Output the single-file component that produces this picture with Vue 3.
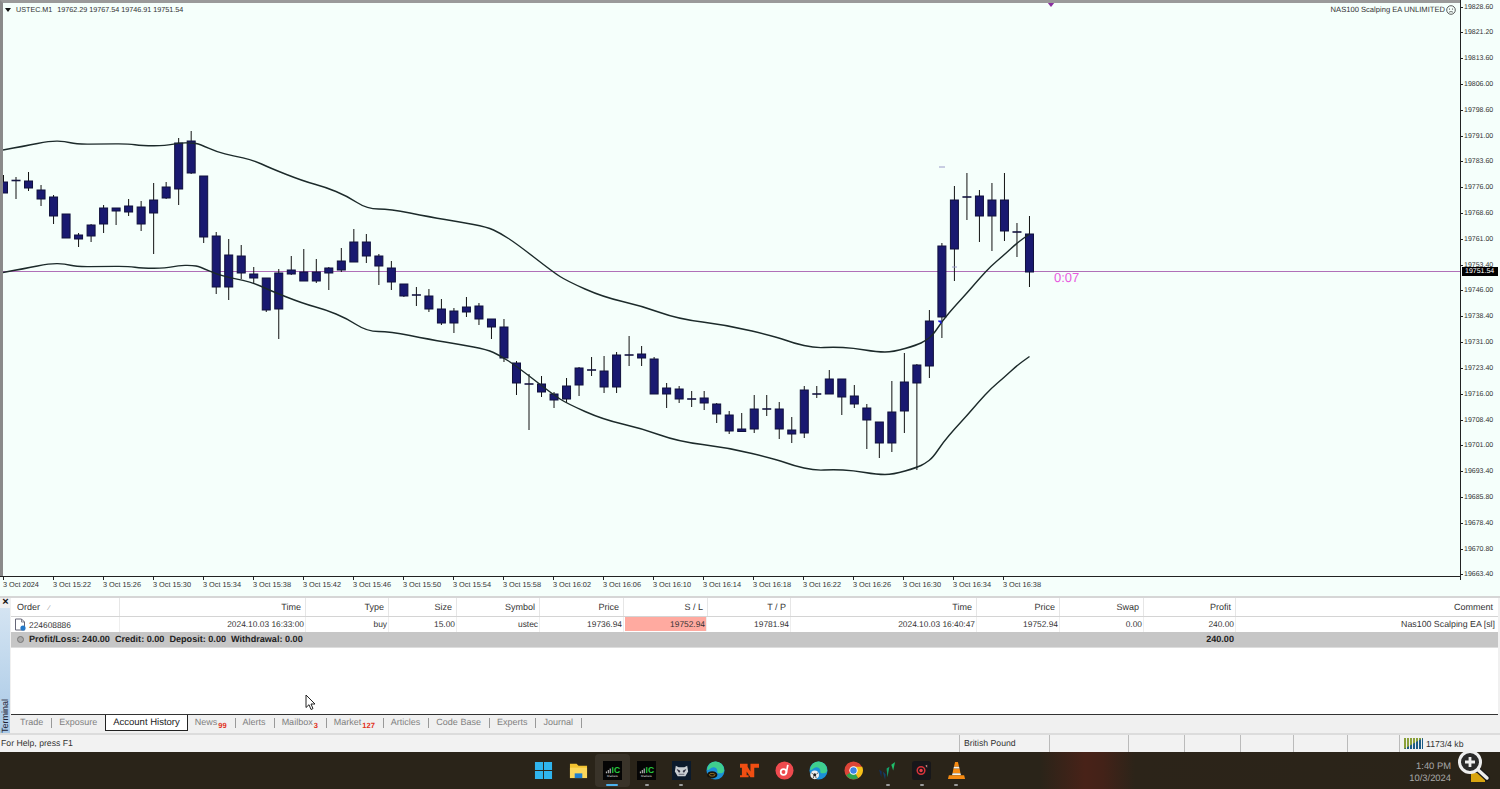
<script setup>
import { computed } from 'vue'

// high, body top, body bottom, low (page y). Candles are about 12.5px apart
const bars = [
  [175, 182, 193, 193], [177, 180.5, 180.5, 199], [172, 181, 188, 191], [185, 190, 199, 206], [195, 197, 216, 224],
  [214, 214, 238, 238], [233, 235, 239, 247], [224, 225, 236, 242], [205, 208, 224, 233], [208, 208, 211, 225],
  [199, 206, 212, 216], [201, 207, 224, 231], [183, 200, 213, 254], [182, 187, 198, 199], [138, 143, 189, 205],
  [131, 141, 173, 174], [176, 176, 237, 243], [232, 236, 287, 294], [239, 255, 287, 300], [245, 256, 273, 279],
  [267, 274, 278, 283], [278, 278, 310, 312], [269, 273, 309, 339], [256, 270, 274, 275], [249, 272, 281, 281],
  [259, 272, 281, 283], [267, 268, 273, 290], [248, 261, 270, 272], [229, 242, 262, 262], [234, 242, 256, 263],
  [254, 256, 266, 285], [261, 268, 282, 290], [284, 284, 296, 297], [287, 295, 295, 306], [289, 296, 309, 312],
  [299, 309, 323, 325], [308, 311, 323, 333], [297, 307, 312, 317], [303, 306, 319, 325], [319, 319, 327, 339],
  [319, 327, 358, 362], [361, 363, 383, 395], [374, 384, 384, 430], [376, 384, 392, 397], [392, 394, 400, 408],
  [378, 386, 399, 403], [367, 368, 385, 396], [357, 370, 370, 376], [356, 371, 387, 393], [352, 355, 387, 393],
  [336, 355, 355, 366], [346, 354, 358, 366], [357, 359, 394, 394], [383, 388, 394, 408], [386, 389, 399, 403],
  [391, 399, 399, 407], [391, 398, 403, 410], [403, 404, 414, 423], [411, 415, 431, 434], [413, 429, 431.5, 432],
  [395, 409, 429, 433], [395, 409, 409, 416], [402, 409, 429, 439], [417, 430, 434, 443], [386, 390, 433, 438],
  [386, 394, 394, 398], [370, 379, 394, 394], [379, 379, 397, 415], [385, 396, 404, 408], [404, 408, 420, 449],
  [422, 422, 443, 458], [381, 412, 443, 452], [353, 382, 411, 433], [364, 365, 383, 470], [310, 321, 366, 378],
  [243, 246, 317, 338], [186, 200, 249, 281], [173, 197, 197, 220], [190, 196, 216, 242], [183, 200, 216, 251],
  [173, 200, 231, 241], [223, 232, 232, 257], [216, 234, 272, 287]
]

const candles = computed(() => bars.map((b, i) => ({
  x: 3.5 + 12.512 * i,
  high: b[0],
  top: b[1],
  bottom: b[2],
  low: b[3],
  doji: b[1] === b[2]
})))

// upper band, the lower one has the same shape 122.5px further down
const band = [
  [3, 150], [25, 146], [50, 141], [65, 141.3], [76, 144.3], [103, 144], [128, 143.7], [142, 145.7], [166, 145.7], [178, 143],
  [192, 142.7], [200, 144.3], [217, 152], [233, 155.7], [253, 160], [270, 168], [303, 181], [325, 187], [347, 196], [367, 209],
  [390, 209], [430, 217], [460, 222], [487, 227], [500, 233], [517, 244], [553, 272], [567, 281], [603, 297], [642, 306],
  [678, 319], [727, 325], [777, 337], [793, 343], [815, 348], [833, 347], [853, 348], [877, 352], [893, 352], [917, 345],
  [925, 341], [933, 335], [943, 320], [955, 306], [967, 293], [979, 279], [991, 266], [1004, 255], [1017, 243], [1029.5, 234]
]

// quadratic through the midpoints so the band has no kinks
function smoothPath(points, shift) {
  const pts = points.map((p) => [p[0], p[1] + shift])
  let d = `M${pts[0][0]} ${pts[0][1]}`
  for (let i = 1; i < pts.length - 1; i++) {
    const mx = (pts[i][0] + pts[i + 1][0]) / 2
    const my = (pts[i][1] + pts[i + 1][1]) / 2
    d += `Q${pts[i][0]} ${pts[i][1]} ${mx} ${my}`
  }
  const last = pts[pts.length - 1]
  return `${d}L${last[0]} ${last[1]}`
}
const upperBand = smoothPath(band, 0)
const lowerBand = smoothPath(band, 122.5)

const prices = [
  '19828.60', '19821.20', '19813.60', '19806.00', '19798.60', '19791.00', '19783.60', '19776.00',
  '19768.60', '19761.00', '19753.40', '19746.00', '19738.40', '19731.00', '19723.40', '19716.00',
  '19708.40', '19701.00', '19693.40', '19685.80', '19678.40', '19670.80', '19663.40'
]
const times = [
  '3 Oct 2024', '3 Oct 15:22', '3 Oct 15:26', '3 Oct 15:30', '3 Oct 15:34', '3 Oct 15:38', '3 Oct 15:42',
  '3 Oct 15:46', '3 Oct 15:50', '3 Oct 15:54', '3 Oct 15:58', '3 Oct 16:02', '3 Oct 16:06', '3 Oct 16:10',
  '3 Oct 16:14', '3 Oct 16:18', '3 Oct 16:22', '3 Oct 16:26', '3 Oct 16:30', '3 Oct 16:34', '3 Oct 16:38'
]

const headers = ['Time', 'Type', 'Size', 'Symbol', 'Price', 'S / L', 'T / P', 'Time', 'Price', 'Swap', 'Profit', 'Comment']
const row = ['2024.10.03 16:33:00', 'buy', '15.00', 'ustec', '19736.94', '19752.94', '19781.94', '2024.10.03 16:40:47', '19752.94', '0.00', '240.00', 'Nas100 Scalping EA [sl]']

const tabs = [
  { name: 'Trade' }, { name: 'Exposure' }, { name: 'Account History', active: true }, { name: 'News', badge: '99' },
  { name: 'Alerts' }, { name: 'Mailbox', badge: '3' }, { name: 'Market', badge: '127' }, { name: 'Articles' },
  { name: 'Code Base' }, { name: 'Experts' }, { name: 'Journal' }
]

const statusCells = [
  { width: 90, text: 'British Pound' }, { width: 79 }, { width: 56 }, { width: 56 }, { width: 53 }, { width: 54 }, { width: 52 }
]
</script>

<template>
  <div class="screen">
    <section class="chart-window">
      <div class="chart-row">
        <div class="plot">
          <svg class="plot-svg" width="1460" height="576" viewBox="0 0 1460 576">
            <line x1="0" y1="271.5" x2="1460" y2="271.5" stroke="#b070b8" stroke-width="1" />
            <g v-for="c in candles" :key="c.x">
              <line :x1="c.x" :x2="c.x" :y1="c.high" :y2="c.low" stroke="#111" stroke-width="1" />
              <line v-if="c.doji" :x1="c.x - 4.5" :x2="c.x + 4.5" :y1="c.top" :y2="c.top" stroke="#14143f" stroke-width="1.6" />
              <rect v-else :x="c.x - 4" :y="c.top" width="8" :height="c.bottom - c.top" fill="#191970" stroke="#10103c" stroke-width="1" />
            </g>
            <path :d="upperBand" fill="none" stroke="#1c2a2a" stroke-width="1.4" stroke-linejoin="round" />
            <path :d="lowerBand" fill="none" stroke="#1c2a2a" stroke-width="1.4" stroke-linejoin="round" />
            <line x1="939" y1="167" x2="945" y2="167" stroke="#9a9ac8" stroke-width="1" />
            <line x1="952" y1="267" x2="957" y2="267" stroke="#9a9ac8" stroke-width="1" />
            <path d="M938 320.500h4l-1 1 1 1.500-1 1-1-1.500-1.500-.500z" fill="#1a1ae0" />
            <path d="M1047 2h8l-4 5z" fill="#8a2fa0" />
          </svg>
          <div class="legend">
            <span class="legend-arrow"></span>
            <span>USTEC.M1</span>
            <span class="legend-ohlc">19762.29 19767.54 19746.91 19751.54</span>
          </div>
          <div class="ea-name">
            <span>NAS100 Scalping EA UNLIMITED</span>
            <svg width="10" height="10" viewBox="0 0 10 10">
              <circle cx="5" cy="5" r="4.300" fill="none" stroke="#333" stroke-width=".8" />
              <circle cx="3.500" cy="4" r=".6" fill="#333" />
              <circle cx="6.500" cy="4" r=".6" fill="#333" />
              <path d="M3 7.200q2-1.400 4 0" fill="none" stroke="#333" stroke-width=".7" />
            </svg>
          </div>
          <span class="countdown">0:07</span>
        </div>
        <div class="price-axis">
          <span v-for="p in prices" :key="p" class="price-label">{{ p }}</span>
          <span class="price-tag">19751.54</span>
        </div>
      </div>
      <div class="time-axis">
        <span v-for="t in times" :key="t" class="time-label">{{ t }}</span>
      </div>
    </section>

    <section class="terminal">
      <aside class="terminal-side">
        <span class="side-close">×</span>
        <div class="side-strip"><span class="side-title">Terminal</span></div>
      </aside>
      <div class="terminal-main">
        <div class="table-area">
          <div class="grid head">
            <div class="cell cell-order">Order <span class="sort-mark">⁄</span></div>
            <div v-for="(h, i) in headers" :key="i" class="cell">{{ h }}</div>
          </div>
          <div class="grid data">
            <div class="cell cell-order">
              <svg width="12" height="13" viewBox="0 0 12 13">
                <path d="M1.500 1h6l3 3v8h-9z" fill="#fff" stroke="#667" stroke-width="1" />
                <path d="M7.500 1v3h3" fill="none" stroke="#667" stroke-width=".8" />
                <circle cx="9" cy="10" r="2.600" fill="#2478c8" />
              </svg>
              <span>224608886</span>
            </div>
            <div v-for="(v, i) in row" :key="i" class="cell" :class="{ 'cell-sl': i === 5 }">{{ v }}</div>
          </div>
          <div class="grid total">
            <div class="total-text">
              <span class="total-dot"></span>
              <span>Profit/Loss: 240.00</span>
              <span>Credit: 0.00</span>
              <span>Deposit: 0.00</span>
              <span>Withdrawal: 0.00</span>
            </div>
            <div class="total-profit">240.00</div>
          </div>
          <svg class="cursor" width="12" height="17" viewBox="0 0 12 17">
            <path d="M1 1v12.500l3-2.800 2 4.800 2-.9-2-4.600h4z" fill="#fff" stroke="#222" stroke-width="1" />
          </svg>
        </div>
        <nav class="tabs">
          <span v-for="t in tabs" :key="t.name" class="tab" :class="{ active: t.active }">
            {{ t.name }}<sub v-if="t.badge" class="tab-badge">{{ t.badge }}</sub>
          </span>
        </nav>
      </div>
    </section>

    <footer class="status-bar">
      <span class="status-help">For Help, press F1</span>
      <span v-for="(s, i) in statusCells" :key="i" class="status-cell" :style="{ width: s.width + 'px' }">{{ s.text }}</span>
      <span class="status-net">
        <svg width="19" height="11" viewBox="0 0 19 11">
          <path d="M0 0h19v11H0z" fill="#8aa03a" />
          <path d="M0 11L19 0v11z" fill="#1d5d86" />
          <path d="M2.500 0v11M5.500 0v11M8.500 0v11M11.500 0v11M14.500 0v11M17.500 0v11" stroke="#f0f0f0" stroke-width="1" />
        </svg>
        1173/4 kb
      </span>
    </footer>

    <div class="taskbar">
      <div class="task-icons">
        <div class="task-item">
          <svg viewBox="0 0 20 20"><path d="M1 1h8.500v8.500H1zM10.500 1H19v8.500h-8.500zM1 10.500h8.500V19H1zM10.500 10.500H19V19h-8.500z" fill="#2fb4ee" /></svg>
        </div>
        <div class="task-item">
          <svg viewBox="0 0 20 20">
            <path d="M1 3h7l2 2h9v13H1z" fill="#f2c230" />
            <path d="M1 7h18v11H1z" fill="#fbd75a" />
            <path d="M6 13h8v5H6z" fill="#1f7fd0" />
          </svg>
        </div>
        <div class="task-item active">
          <svg viewBox="0 0 20 20">
            <path d="M0 0h20v20H0z" fill="#050505" />
            <path d="M3 11h1.200v2H3zM5 9.500h1.200V13H5zM7 8h1.200v5H7z" fill="#bbb" />
            <text x="9" y="12.500" class="ic-text">IC</text>
            <text x="10" y="16.500" class="ic-sub">Markets</text>
          </svg>
        </div>
        <div class="task-item running">
          <svg viewBox="0 0 20 20">
            <path d="M0 0h20v20H0z" fill="#050505" />
            <path d="M3 11h1.200v2H3zM5 9.500h1.200V13H5zM7 8h1.200v5H7z" fill="#bbb" />
            <text x="9" y="12.500" class="ic-text">IC</text>
            <text x="10" y="16.500" class="ic-sub">Markets</text>
          </svg>
        </div>
        <div class="task-item running">
          <svg viewBox="0 0 20 20">
            <path d="M0 0h20v20H0z" fill="#0b1a2c" />
            <path d="M4 5l3 1.500h6L16 5l1 6-3 5H6l-3-5z" fill="#c9ced3" />
            <path d="M5.500 9l3 1.500-1 1.500zM14.500 9l-3 1.500 1 1.500zM7 14h6" fill="#223" stroke="#223" stroke-width=".6" />
          </svg>
        </div>
        <div class="task-item">
          <svg viewBox="0 0 20 20">
            <circle cx="10" cy="10" r="9.500" fill="#1b8fd8" />
            <path d="M1 9a9 9 0 0 1 18 1c0 2-2 3-4.500 3-2 0-3-1-2.500-2.500C12 7 8 5.500 5 7.500 3 9 2 10 1 9z" fill="#3fcf8e" />
            <ellipse cx="6.500" cy="14.500" rx="5.500" ry="3.800" fill="#17140c" />
            <ellipse cx="6.500" cy="14.500" rx="3" ry="1.400" fill="none" stroke="#b08a30" stroke-width=".8" />
          </svg>
        </div>
        <div class="task-item">
          <svg viewBox="0 0 20 20">
            <path d="M0 3h8v3l3 5V3h9v4h-5v10h-4l-4-6v4h2v2H0v-2h2V7H0z" fill="#f04e12" />
          </svg>
        </div>
        <div class="task-item">
          <svg viewBox="0 0 20 20">
            <circle cx="10" cy="10" r="9.500" fill="#ee4a4e" />
            <circle cx="9" cy="11.500" r="3" fill="none" stroke="#fff" stroke-width="1.800" />
            <path d="M13.500 4l-1.800 9.500" stroke="#fff" stroke-width="1.800" fill="none" />
          </svg>
        </div>
        <div class="task-item">
          <svg viewBox="0 0 20 20">
            <circle cx="10" cy="10" r="9.500" fill="#1b8fd8" />
            <path d="M1 9a9 9 0 0 1 18 1c0 2-2 3-4.500 3-2 0-3-1-2.500-2.500C12 7 8 5.500 5 7.500 3 9 2 10 1 9z" fill="#3fcf8e" />
            <circle cx="6" cy="14.500" r="4.600" fill="#eee" />
            <circle cx="6" cy="14.500" r="1.600" fill="#222" />
            <path d="M2.500 12.500l1.500 1M9.500 12.500L8 13.500M4.500 18l.5-2M7.500 18L7 16" stroke="#222" stroke-width=".8" />
          </svg>
        </div>
        <div class="task-item">
          <svg viewBox="0 0 20 20">
            <circle cx="10" cy="10" r="9.500" fill="#dc4437" />
            <path d="M10 10L2.300 15A9.500 9.500 0 0 0 15 18l-5-8z" fill="#2fa44f" />
            <path d="M10 10l5 8A9.500 9.500 0 0 0 19.200 6H10z" fill="#f6c119" />
            <circle cx="10" cy="10" r="4.400" fill="#fff" />
            <circle cx="10" cy="10" r="3.400" fill="#3c82e6" />
          </svg>
        </div>
        <div class="task-item running">
          <svg viewBox="0 0 20 20">
            <path d="M1 9l3 2-.5 6z" fill="#12305c" />
            <path d="M5 11l3 3-.500 6z" fill="#123f6c" />
            <path d="M9 8l3-2-2 11z" fill="#16a06a" />
            <path d="M14 4l4-3-2 9z" fill="#1fbf6a" />
          </svg>
        </div>
        <div class="task-item running">
          <svg viewBox="0 0 20 20">
            <rect x="0" y="0" width="20" height="20" rx="3" fill="#17171a" />
            <circle cx="9.500" cy="10" r="4" fill="none" stroke="#d8333a" stroke-width="1.600" />
            <circle cx="9.500" cy="10" r="1.800" fill="#e8404a" />
            <path d="M14 5l2-1v3z" fill="#c88" />
          </svg>
        </div>
        <div class="task-item running">
          <svg viewBox="0 0 20 20">
            <path d="M8.500 1h3l1.200 5h-5.400zM6.800 8h6.400l1 5H5.800z" fill="#f58a12" />
            <path d="M7.300 6h5.400l.5 2H6.800zM5.800 13h8.400l.5 2H5.300z" fill="#f4f1ea" />
            <path d="M2 15h16l1 4H1z" fill="#f58a12" />
          </svg>
        </div>
      </div>
      <div class="clock">
        <span>1:40 PM</span>
        <span>10/3/2024</span>
      </div>
      <svg class="tray-file" width="14" height="10" viewBox="0 0 14 10">
        <path d="M0 1h14v9H0z" fill="#d8a410" />
      </svg>
      <svg class="magnifier" width="34" height="34" viewBox="0 0 34 34">
        <path d="M19 19l11 10" stroke="#1a1a1a" stroke-width="6" stroke-linecap="round" />
        <path d="M19 19l11 10" stroke="#eee" stroke-width="3.400" stroke-linecap="round" />
        <circle cx="13" cy="13" r="10.500" fill="#2a2a2a" stroke="#eee" stroke-width="3" />
        <path d="M13 8v10M8 13h10" stroke="#eee" stroke-width="2.800" />
      </svg>
    </div>
  </div>
</template>

<style scoped>
.screen {
  position: relative;
  display: flex;
  flex-direction: column;
  width: 1500px;
  height: 789px;
  overflow: hidden;
  font-family: "Liberation Sans", Arial, sans-serif;
  text-rendering: geometricPrecision;
  color: #333;
  background: #f0f0f0;
}

/* chart */
.chart-window {
  height: 596px;
  background: #f5fffb;
}
.chart-row {
  display: flex;
  height: 577px;
}
.plot {
  position: relative;
  width: 1460px;
  height: 577px;
  overflow: hidden;
  border-bottom: 1px solid #222;
  box-sizing: border-box;
}
.plot::after {
  content: '';
  position: absolute;
  inset: 0;
  border-top: 3px solid #9a9a9a;
  border-left: 3px solid #8a8a8a;
  pointer-events: none;
}
.plot-svg {
  display: block;
}
.legend {
  position: absolute;
  top: 5px;
  left: 5px;
  z-index: 1;
  display: flex;
  align-items: center;
  gap: 3px;
  font-size: 7.2px;
  line-height: 9px;
}
.legend-arrow {
  width: 0;
  height: 0;
  margin-right: 2px;
  border-left: 3px solid transparent;
  border-right: 3px solid transparent;
  border-top: 4px solid #111;
}
.legend-ohlc {
  margin-left: 2px;
}
.ea-name {
  position: absolute;
  top: 5px;
  right: 4px;
  z-index: 1;
  display: flex;
  align-items: center;
  gap: 1px;
  font-size: 7.6px;
  line-height: 10px;
}
.countdown {
  position: absolute;
  left: 1054px;
  top: 270px;
  font-size: 13px;
  line-height: 16px;
  color: #e85adf;
}
.price-axis {
  position: relative;
  flex: 1;
  display: flex;
  flex-direction: column;
  justify-content: space-between;
  padding: 3.5px 0 0;
  height: 576px;
  border-left: 1px solid #222;
}
.price-label {
  position: relative;
  padding-left: 3px;
  font-size: 7px;
  line-height: 8px;
}
.price-label::before {
  content: '';
  position: absolute;
  left: 0;
  top: 3px;
  width: 2px;
  height: 1px;
  background: #222;
}
.price-tag {
  position: absolute;
  top: 267px;
  left: 1px;
  width: 36px;
  height: 9px;
  padding-left: 3px;
  box-sizing: border-box;
  font-size: 7px;
  line-height: 9px;
  color: #fff;
  background: #000;
}
.time-axis {
  display: flex;
  padding-left: 3px;
}
.time-label {
  position: relative;
  width: 50px;
  flex: none;
  padding-top: 3px;
  font-size: 7.35px;
  line-height: 9px;
}
.time-label::before {
  content: '';
  position: absolute;
  left: 0;
  top: 0;
  width: 1px;
  height: 3px;
  background: #222;
}

/* terminal */
.terminal {
  display: flex;
  height: 137px;
  border-top: 2px solid #d6d6d6;
  box-sizing: border-box;
}
.terminal-side {
  display: flex;
  flex-direction: column;
  width: 11px;
  flex: none;
}
.side-close {
  height: 10px;
  font-size: 11px;
  font-weight: 700;
  line-height: 9px;
  text-align: center;
  color: #111;
}
.side-strip {
  flex: 1;
  display: flex;
  align-items: flex-end;
  margin-right: 1px;
  background: linear-gradient(#d4e4f2, #a9c9e6);
}
.side-title {
  writing-mode: vertical-rl;
  transform: rotate(180deg);
  padding: 0 0 3px;
  font-size: 9px;
  line-height: 10px;
  color: #223;
}
.terminal-main {
  flex: 1;
  display: flex;
  flex-direction: column;
  min-width: 0;
  padding-right: 2px;
}
.table-area {
  position: relative;
  flex: 1;
  background: #fff;
}
.grid {
  display: grid;
  grid-template-columns: 109px 186px 83px 68px 83px 84px 84px 83px 186px 83px 84px 92px 262px;
  width: 1487px;
  box-sizing: border-box;
}
.head {
  height: 19px;
  border-bottom: 1px solid #d4d4d4;
  font-size: 9px;
  line-height: 18px;
}
.head .cell {
  padding-right: 4px;
  border-right: 1px solid #e6e6e6;
}
.head .cell:last-child {
  border-right: 0;
  padding-right: 5px;
}
.data {
  height: 15px;
  font-size: 8.4px;
  line-height: 14px;
}
.data .cell {
  padding-right: 1px;
  border-right: 1px solid #eee;
}
.data .cell:last-child {
  padding-right: 3px;
  border-right: 0;
  font-size: 8.8px;
}
.cell {
  text-align: right;
  white-space: nowrap;
  box-sizing: border-box;
  overflow: hidden;
}
.head .cell-order {
  padding-left: 6px;
  text-align: left;
}
.sort-mark {
  margin-left: 6px;
  font-size: 7px;
  color: #888;
}
.data .cell-order {
  display: flex;
  align-items: center;
  gap: 3px;
  padding-left: 3px;
  text-align: left;
}
.data .cell-sl {
  margin: 0 1px 1px;
  background: #ffaaa0;
}
.total {
  height: 16px;
  background: #c6c6c6;
  border-bottom: 1px solid #ddd;
  font-size: 9.1px;
  font-weight: 700;
  line-height: 15px;
  color: #222;
}
.total-text {
  grid-column: 1 / span 3;
  display: flex;
  align-items: center;
  gap: 5px;
  padding-left: 6px;
  white-space: nowrap;
}
.total-dot {
  width: 5px;
  height: 5px;
  border: 1px solid #777;
  border-radius: 50%;
  background: #aaa;
}
.total-profit {
  grid-column: 12;
  padding-right: 2px;
  text-align: right;
}
.cursor {
  position: absolute;
  left: 294px;
  top: 96px;
}
.tabs {
  display: flex;
  height: 19px;
  padding-left: 2px;
  border-top: 1px solid #333;
  box-sizing: border-box;
  font-size: 9px;
  line-height: 15px;
  color: #808080;
  background: #f0f0f0;
}
.tab {
  position: relative;
  padding: 0 8px 0 7px;
  white-space: nowrap;
  margin-right: 1px;
}
.tab::after {
  content: '';
  position: absolute;
  top: 3px;
  right: -1px;
  width: 1px;
  height: 10px;
  background: #999;
}
.tab.active {
  margin-right: 0;
  height: 15px;
  padding: 0 7px;
  border: 1px solid #222;
  border-top: 0;
  font-size: 9.5px;
  background: #fff;
  color: #222;
}
.tab.active::after {
  display: none;
}
.tab:has(+ .tab.active) {
  margin-right: 0;
}
.tab:has(+ .tab.active)::after {
  display: none;
}
.tab-badge {
  margin-left: 1px;
  font-size: 7.5px;
  font-weight: 700;
  line-height: 1;
  vertical-align: -3px;
  color: #e03020;
}

/* status bar */
.status-bar {
  display: flex;
  height: 19px;
  border-top: 2px solid #dcdcdc;
  box-sizing: border-box;
  font-size: 8.7px;
  line-height: 16px;
  color: #333;
  background: #f2f2f2;
}
.status-help {
  width: 959px;
  flex: none;
  padding-left: 1px;
  box-sizing: border-box;
}
.status-cell {
  flex: none;
  padding-left: 4px;
  box-sizing: border-box;
  border-left: 1px solid #bbb;
}
.status-net {
  display: flex;
  align-items: center;
  gap: 3px;
  padding-left: 4px;
  border-left: 1px solid #bbb;
}

/* taskbar */
.taskbar {
  position: relative;
  flex: 1;
  display: flex;
  align-items: center;
  justify-content: center;
  background: linear-gradient(90deg, #2a2419 0, #2a2419 1040px, #482218 1085px, #432218 1103px, #2c2419 1135px, #2a2419 100%);
}
.task-icons {
  display: flex;
}
.task-item {
  position: relative;
  display: flex;
  align-items: center;
  justify-content: center;
  width: 34.4px;
  height: 33px;
  border-radius: 4px;
}
.task-item svg {
  width: 19px;
  height: 19px;
}
.task-item.active {
  background: rgba(255, 255, 255, .07);
}
.task-item.active::after,
.task-item.running::after {
  content: '';
  position: absolute;
  left: 50%;
  bottom: 1px;
  width: 4px;
  height: 2px;
  margin-left: -2px;
  border-radius: 1px;
  background: #9a9a9a;
}
.task-item.active::after {
  width: 12px;
  margin-left: -6px;
  background: #4db2ee;
}
.ic-text {
  font-size: 9px;
  font-weight: 700;
  fill: #27c93f;
}
.ic-sub {
  font-size: 3.2px;
  text-anchor: middle;
  fill: #ddd;
}
.clock {
  position: absolute;
  right: 49px;
  top: 8px;
  display: flex;
  flex-direction: column;
  align-items: flex-end;
  gap: 1px;
  font-size: 9.4px;
  line-height: 11px;
  color: #a9a9a9;
}
.tray-file {
  position: absolute;
  left: 1471px;
  top: 20px;
}
.magnifier {
  position: absolute;
  left: 1457px;
  top: -3px;
}
</style>

<style>
html,
body {
  background: #f0f0f0;
}
</style>
